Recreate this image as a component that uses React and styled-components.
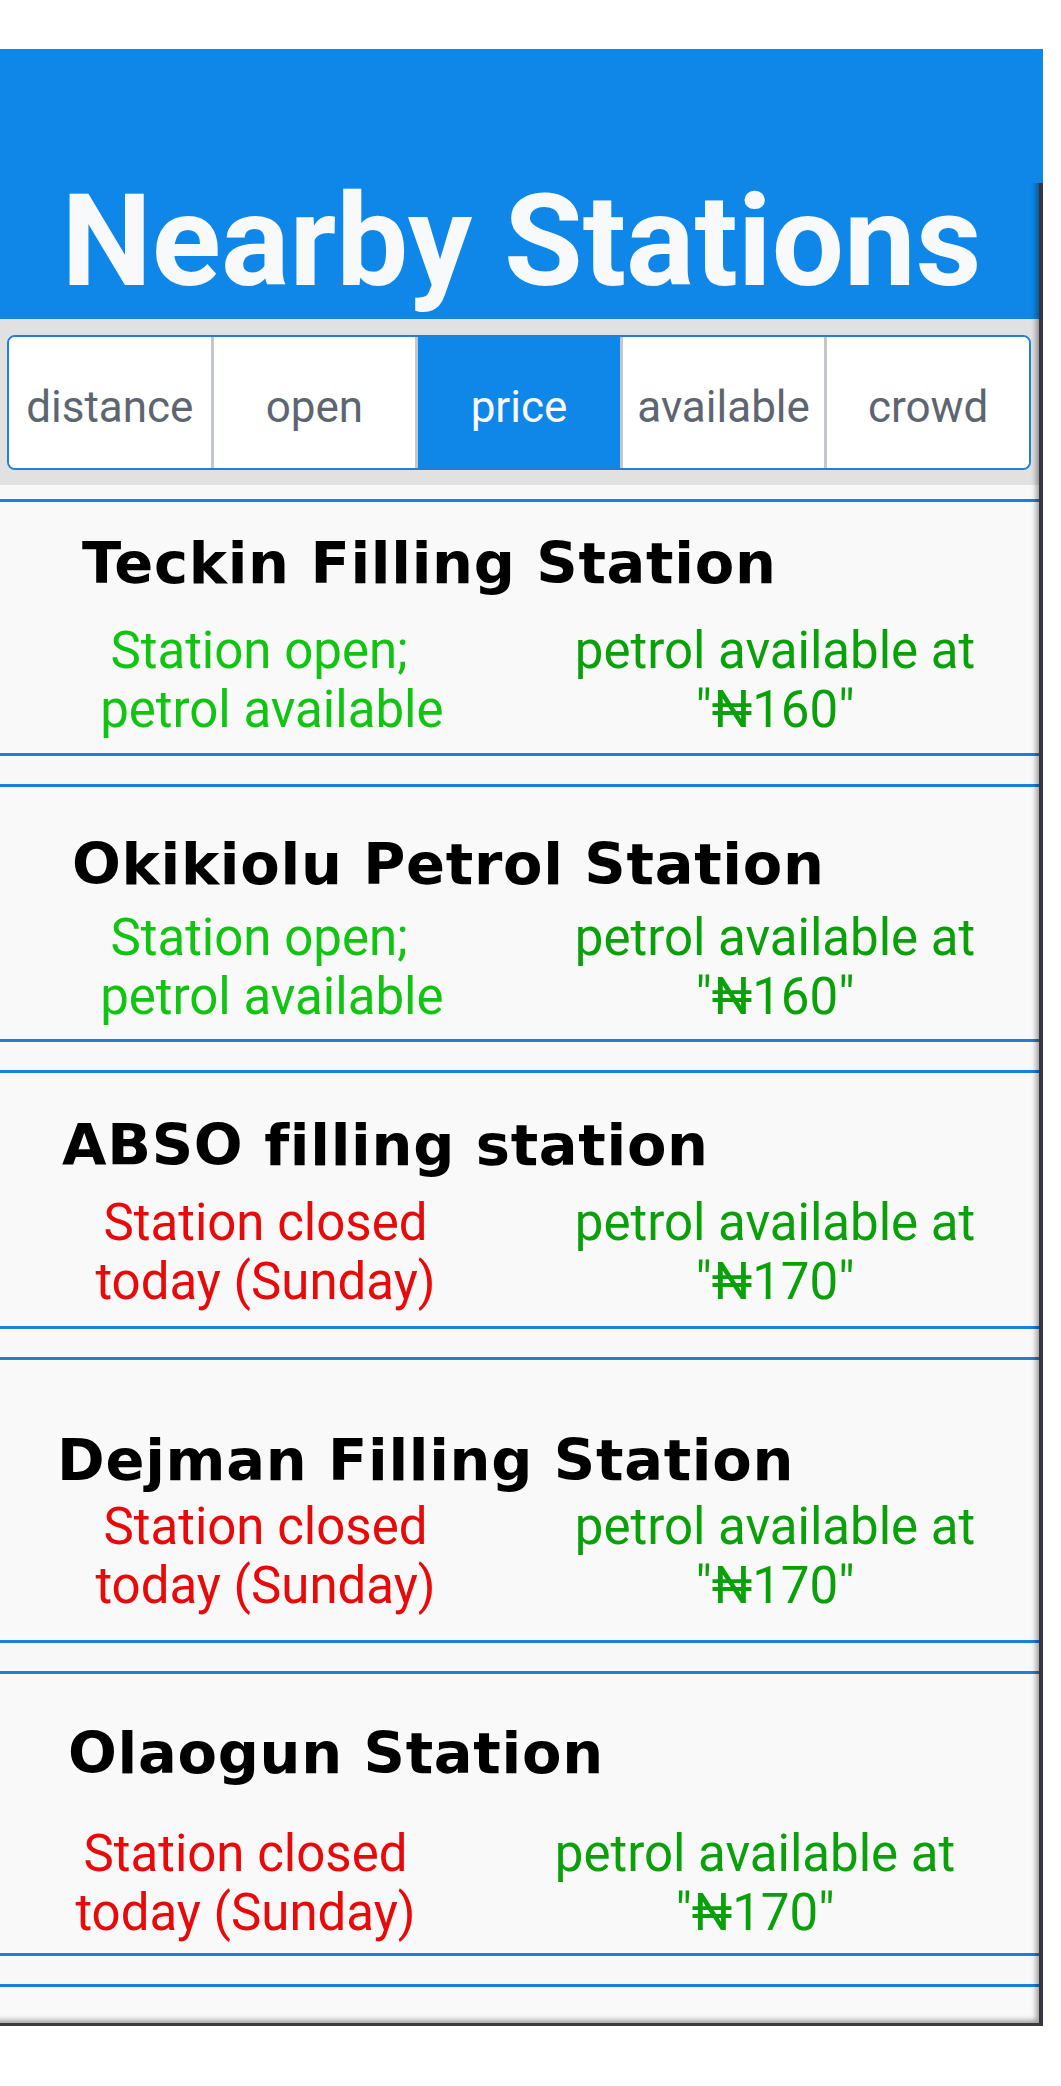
import styled, { createGlobalStyle } from "styled-components"

const GlobalStyle = createGlobalStyle`
    body {
        margin: 0;
        background: #ffffff;
        font-family: Roboto, "Liberation Sans", sans-serif;
    }
    * {
        box-sizing: border-box;
    }
`

const Page = styled.div`
    position: relative;
    display: flex;
    flex-direction: column;
    width: 1043px;
    height: 1977px;
    margin-top: 49px;
    overflow: hidden;

    &::after {
        content: "";
        position: absolute;
        top: 134px;
        left: 0;
        right: 0;
        bottom: 0;
        border-right: 4px solid #34373f;
        border-bottom: 3px solid #3b3b3b;
        box-shadow: inset -5px -5px 5px -2px rgba(0, 0, 0, 0.35);
        pointer-events: none;
    }
`

const Header = styled.header`
    flex-shrink: 0;
    height: 270px;
    padding-top: 128px;
    background-color: #0e87e8;
    text-align: center;

    h1 {
        margin: 0;
        font-family: Roboto, sans-serif;
        font-weight: 700;
        font-size: 128px;
        line-height: 129px;
        color: #f8f9fa;
    }
`

const FilterBar = styled.div`
    flex-shrink: 0;
    padding: 16px 12px 15px 7px;
    background-color: #e1e1e1;
`

const FilterGroup = styled.div`
    display: flex;
    height: 135px;
    border: 2px solid #1e80da;
    border-radius: 8px;
    overflow: hidden;
    background-color: #ffffff;
`

const FilterButton = styled.div`
    flex: 1;
    display: flex;
    justify-content: center;
    align-items: center;
    padding-top: 9px;
    border-left: 3px solid #c1c7cd;
    background-color: ${props => (props.$active ? "#0e87e8" : "#ffffff")};
    color: ${props => (props.$active ? "#f8f9fa" : "#5d6670")};
    font-family: Roboto, sans-serif;
    font-size: 44px;

    &:first-child {
        border-left: none;
    }
`

const List = styled.div`
    flex: 1;
    min-height: 0;
    display: flex;
    flex-direction: column;
    gap: 28px;
    padding-top: 14px;
    overflow: hidden;
    background-color: #f8f8f8;
`

const Card = styled.div`
    flex-shrink: 0;
    padding: ${props => props.$top}px 0 ${props => props.$bottom}px 0;
    border-top: 3px solid #1c7fd8;
    border-bottom: 3px solid #1c7fd8;
    background-color: #f9f9f9;
`

const Name = styled.h2`
    margin: 0 0 ${props => props.$gap}px ${props => props.$indent}px;
    font-family: "DejaVu Sans", Verdana, sans-serif;
    font-weight: 700;
    font-size: 57.5px;
    line-height: 57px;
    letter-spacing: 0.7px;
    color: #000000;
    white-space: nowrap;
`

const StatusRow = styled.div`
    display: grid;
    grid-template-columns: 507px 512px;
    margin-left: ${props => 12 + props.$shift}px;
`

const Status = styled.p`
    max-width: ${props => props.$width}px;
    margin: 0 auto;
    font-family: Roboto, sans-serif;
    font-size: 51px;
    line-height: 59px;
    text-align: center;
    white-space: ${props => (props.$keepSpaces ? "break-spaces" : "normal")};
    color: ${props => props.$color};
`

const filters = ["distance", "open", "price", "available", "crowd"]

const stations = [
    { name: "Teckin Filling Station", open: true, price: 160, indent: 82, top: 33, gap: 29, bottom: 14, shift: 0 },
    { name: "Okikiolu Petrol Station", open: true, price: 160, indent: 72, top: 49, gap: 15, bottom: 13, shift: 0 },
    { name: "ABSO filling station", open: false, price: 170, indent: 62, top: 44, gap: 19, bottom: 15, shift: 0 },
    { name: "Dejman Filling Station", open: false, price: 170, indent: 57, top: 72, gap: 8, bottom: 25, shift: 0 },
    { name: "Olaogun Station", open: false, price: 170, indent: 68, top: 51, gap: 42, bottom: 11, shift: -20 },
]

function StationCard({ station }) {
    return (
        <Card $top={station.top} $bottom={station.bottom}>
            <Name $indent={station.indent} $gap={station.gap}>{station.name}</Name>
            <StatusRow $shift={station.shift}>
                {station.open ? (
                    <Status $width={390} $color="#12c412" $keepSpaces>
                        {"Station open; \u00a0petrol available"}
                    </Status>
                ) : (
                    <Status $width={390} $color="#e80a0a">Station closed today (Sunday)</Status>
                )}
                <Status $width={470} $color="#0aa00a">
                    petrol available at "₦{station.price}"
                </Status>
            </StatusRow>
        </Card>
    )
}

function App() {
    return (
        <>
            <GlobalStyle />
            <Page>
                <Header>
                    <h1>Nearby Stations</h1>
                </Header>
                <FilterBar>
                    <FilterGroup>
                        {filters.map(f => (
                            <FilterButton key={f} $active={f === "price"}>{f}</FilterButton>
                        ))}
                    </FilterGroup>
                </FilterBar>
                <List>
                    {stations.map(s => (
                        <StationCard key={s.name} station={s} />
                    ))}
                    <Card $top={40} $bottom={0} />
                </List>
            </Page>
        </>
    )
}

export default App
